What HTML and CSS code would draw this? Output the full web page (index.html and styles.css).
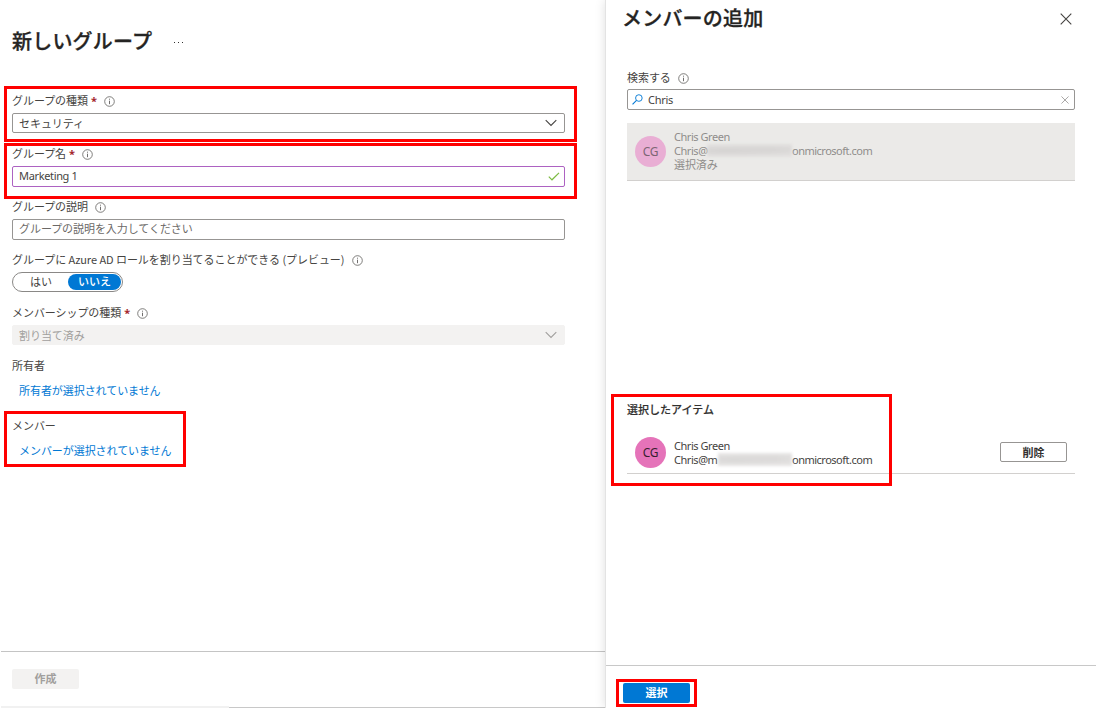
FILE: index.html
```html
<!DOCTYPE html>
<html lang="ja">
<head>
<meta charset="utf-8">
<title>新しいグループ</title>
<link rel="stylesheet" href="styles.css">
</head>
<body>
<svg class="defs" width="0" height="0">
  <symbol id="info" viewBox="0 0 11 11"><circle cx="5.5" cy="5.5" r="4.8" fill="none" stroke="#605e5c" stroke-width=".8"/><path d="M5.5 4.7V8.2M5.5 2.7V3.7" stroke="#605e5c" stroke-width=".9"/></symbol>
  <symbol id="chevron" viewBox="0 0 12 8"><path d="M.7 1.2 6 6.5 11.3 1.2" fill="none" stroke="currentColor" stroke-width="1.1"/></symbol>
  <symbol id="cross" viewBox="0 0 12 12"><path d="M.7.7 11.3 11.3M11.3.7.7 11.3" fill="none" stroke="currentColor" stroke-width="1.1"/></symbol>
</svg>
<div class="app">
  <main class="group">
    <header class="group-head"><h1 class="title">新しいグループ</h1><span class="more"><i></i><i></i><i></i></span></header>
    <form class="form">
      <div class="field marked">
        <div class="label"><span>グループの種類</span><b class="req">*</b><svg class="info"><use href="#info"/></svg></div>
        <div class="input"><span>セキュリティ</span><svg class="chevron"><use href="#chevron"/></svg></div>
      </div>
      <div class="field marked">
        <div class="label"><span>グループ名</span><b class="req">*</b><svg class="info"><use href="#info"/></svg></div>
        <div class="input valid"><span class="latin">Marketing 1</span><svg class="check" viewBox="0 0 12 9"><path d="M.8 4.6 4 7.8 11 .9" fill="none" stroke="#7cbb42" stroke-width="1.2"/></svg></div>
      </div>
      <div class="field">
        <div class="label"><span>グループの説明</span><svg class="info"><use href="#info"/></svg></div>
        <div class="input description"><span>グループの説明を入力してください</span></div>
      </div>
      <div class="field">
        <div class="label"><span class="role">グループに Azure AD ロールを割り当てることができる (プレビュー)</span><svg class="info"><use href="#info"/></svg></div>
        <div class="toggle"><span class="option">はい</span><span class="option on">いいえ</span></div>
      </div>
      <div class="field">
        <div class="label"><span>メンバーシップの種類</span><b class="req">*</b><svg class="info"><use href="#info"/></svg></div>
        <div class="input disabled"><span>割り当て済み</span><svg class="chevron"><use href="#chevron"/></svg></div>
      </div>
      <div class="people"><div class="label">所有者</div><a class="link">所有者が選択されていません</a></div>
      <div class="people members"><div class="label">メンバー</div><a class="link">メンバーが選択されていません</a></div>
    </form>
    <footer class="group-foot"><button class="button inactive" type="button">作成</button><div class="scroll"></div></footer>
  </main>
  <aside class="panel">
    <header class="panel-head"><h2 class="title">メンバーの追加</h2><svg class="close"><use href="#cross"/></svg></header>
    <section class="search">
      <div class="label"><span>検索する</span><svg class="info"><use href="#info"/></svg></div>
      <div class="search-box"><svg class="lens" viewBox="0 0 12 12"><circle cx="7.5" cy="4.4" r="3.6" fill="none" stroke="#0078d4"/><path d="M4.9 7 .6 11.3" stroke="#0078d4" stroke-width="1.2"/></svg><span class="latin">Chris</span><svg class="clear"><use href="#cross"/></svg></div>
      <div class="person result">
        <span class="avatar">CG</span>
        <div class="details"><div>Chris Green</div><div class="mail"><span class="start">Chris@</span><span class="smudge"></span><span class="domain">onmicrosoft.com</span></div><div class="state">選択済み</div></div>
      </div>
    </section>
    <section class="selected">
      <h3 class="subtitle">選択したアイテム</h3>
      <div class="person">
        <span class="avatar">CG</span>
        <div class="details"><div>Chris Green</div><div class="mail"><span class="start">Chris@m</span><span class="smudge"></span><span class="domain">onmicrosoft.com</span></div></div>
        <button class="button remove" type="button">削除</button>
      </div>
    </section>
    <footer class="panel-foot"><div class="pick"><button class="button primary" type="button">選択</button></div></footer>
  </aside>
</div>
</body>
</html>
```
FILE: styles.css
```css
*, *::after { box-sizing: border-box; }
body { margin: 0; font: 11px/14px "Noto Sans CJK JP", sans-serif; letter-spacing: -.06px; color: #454341; background: #fff; }
h1, h2, h3 { margin: 0; }
svg { flex: none; display: block; }
.defs { position: absolute; }
.app { display: grid; grid-template-columns: 606px 490px; height: 708px; overflow: hidden; }
.latin, .details, .avatar { font-family: "Noto Sans", "Noto Sans CJK JP", sans-serif; }
.latin { letter-spacing: -.3px; }
.title { font-size: 20px; line-height: 28px; font-weight: 500; letter-spacing: .2px; color: #252423; -webkit-text-stroke: .3px #252423; white-space: nowrap; }

.group { display: flex; flex-direction: column; min-width: 0; }
.group-head { display: flex; align-items: center; height: 91px; padding: 0 12px 9px; gap: 22px; }
.more { display: flex; gap: 3px; padding-top: 3px; }
.more i { width: 1px; height: 1px; background: #323130; }
.form { flex: 1; padding: 0 41px 0 12px; }
.field { position: relative; height: 53px; }
.label { display: flex; align-items: center; height: 20px; margin-bottom: 2px; padding-bottom: 2px; white-space: nowrap; }
.label .info { margin-top: 2px; }
.req { margin-left: 3px; width: 6px; color: #a4262c; font: 700 11px/14px "Noto Sans", sans-serif; padding-top: 2px; }
.role { letter-spacing: -.05px; }
.info { width: 11px; height: 11px; margin-left: 7px; }
.role + .info { margin-left: 8px; }
.input { display: flex; align-items: center; justify-content: space-between; height: 20px; padding: 0 7px 0 6px; border: 1px solid #979593; border-radius: 2px; }
.input.valid { height: 21px; border-color: #ad62c2; padding: 0 4px 1px 6px; }
.input.valid .latin { letter-spacing: -.35px; }
.description { height: 21px; color: #6b6967; padding-bottom: 3px; }
.input.disabled { border-color: #f3f2f1; background: #f3f2f1; color: #a19f9d; }
.chevron { width: 12px; height: 8px; }
.check { width: 12px; height: 9px; margin-top: 1px; }
.toggle { display: flex; align-items: center; width: 111px; height: 20px; padding: 1px; border: 1px solid #8a8886; border-radius: 10px; }
.option { width: 54px; height: 16px; border-radius: 8px; text-align: center; line-height: 15px; }
.option.on { width: 53px; background: #0078d4; color: #fff; font-weight: 500; }
.people { position: relative; height: 60px; }
.people .label { margin-bottom: 6px; padding-bottom: 2px; }
.link { display: block; padding-left: 7px; color: #0078d4; line-height: 16px; }

/* Red highlight frames laid over the interface */
.marked::after, .members::after, .selected::after { content: ""; position: absolute; border: 3px solid #f00; pointer-events: none; }
.marked::after { left: -8px; top: -5px; width: 573px; height: 56px; }
.marked + .marked::after { top: -1px; }
.members::after { left: -8px; top: -5px; width: 182px; height: 56px; }
.selected::after { left: 5px; top: 0; width: 281px; height: 92px; }

.group-foot { display: flex; flex-direction: column; justify-content: space-between; height: 57px; margin-left: 1px; padding-top: 17px; border-top: 1px solid #c4c4c4; }
.button { display: block; width: 67px; height: 20px; padding: 0 0 1px; border: 0; border-radius: 2px; font: 700 11px/17px "Noto Sans CJK JP", sans-serif; text-align: center; }
.inactive { margin-left: 11px; background: #f3f2f1; color: #a19f9d; }
.scroll { height: 2px; background: linear-gradient(#c8c8c8, #c8c8c8) right bottom / 377px 1px no-repeat, linear-gradient(#f1f1f1, #f1f1f1) left / 228px 2px no-repeat; }

.panel { position: relative; display: flex; flex-direction: column; background: #fff; box-shadow: -1px 0 0 #e3e3e3, -1px 0 10px rgba(0, 0, 0, .13); }
.panel-head { display: flex; justify-content: space-between; align-items: center; height: 38px; padding: 0 24px 2px 16px; }
.close { width: 12px; height: 12px; margin-top: 2px; }
.search { height: 356px; padding: 30px 21px 0; }
.search .label { margin-bottom: 1px; }
.search-box { display: flex; align-items: center; height: 21px; padding: 0 5px 0 4px; border: 1px solid #979593; border-radius: 2px; }
.lens { width: 11px; height: 11px; margin-right: 5px; }
.clear { width: 8px; height: 8px; margin-left: auto; color: #8a8886; }
.person { display: flex; align-items: center; height: 43px; border-bottom: 1px solid #d2d0ce; padding: 0 8px; }
.person.result { height: 58px; margin-top: 13px; background: #ebeae8; color: #8f8d8b; }
.avatar { width: 31px; height: 31px; margin-right: 8px; border-radius: 50%; background: #e573b9; color: #37202f; font-size: 12px; line-height: 32px; letter-spacing: -.3px; text-align: center; }
.result .avatar { background: #e9aed4; color: #7d6674; }
.details { flex: 1; padding-top: 2px; letter-spacing: -.45px; }
.result .details { padding: 0 0 2px; }
.details > div:first-child { letter-spacing: -.45px; }
.details > .state { letter-spacing: -.1px; }
.mail { display: flex; }
.start { width: 33px; }
.domain { letter-spacing: -.5px; }
.smudge { width: 85px; height: 13px; background: radial-gradient(ellipse at 20% 50%, #cfcdcc, transparent 65%), radial-gradient(ellipse at 75% 45%, #d2d0cf, transparent 60%), #e0dedd; filter: blur(1.5px); opacity: .8; }
.selected { position: relative; flex: 1; padding: 5px 21px 0; }
.selected .start { width: 44px; }
.selected .smudge { width: 74px; }
.subtitle { height: 32px; font-size: 11px; line-height: 20px; font-weight: 500; letter-spacing: 0; color: #323130; -webkit-text-stroke: .15px #323130; }
.remove { border: 1px solid #979593; background: #fff; color: #323130; line-height: 16px; }
.panel-foot { height: 43px; border-top: 1px solid #c8c8c8; padding: 13px 10px 0; }
.pick { width: 81px; height: 28px; border: 3px solid #f00; padding: 1px 4px; }
.primary { background: #0078d4; color: #fff; }
```
